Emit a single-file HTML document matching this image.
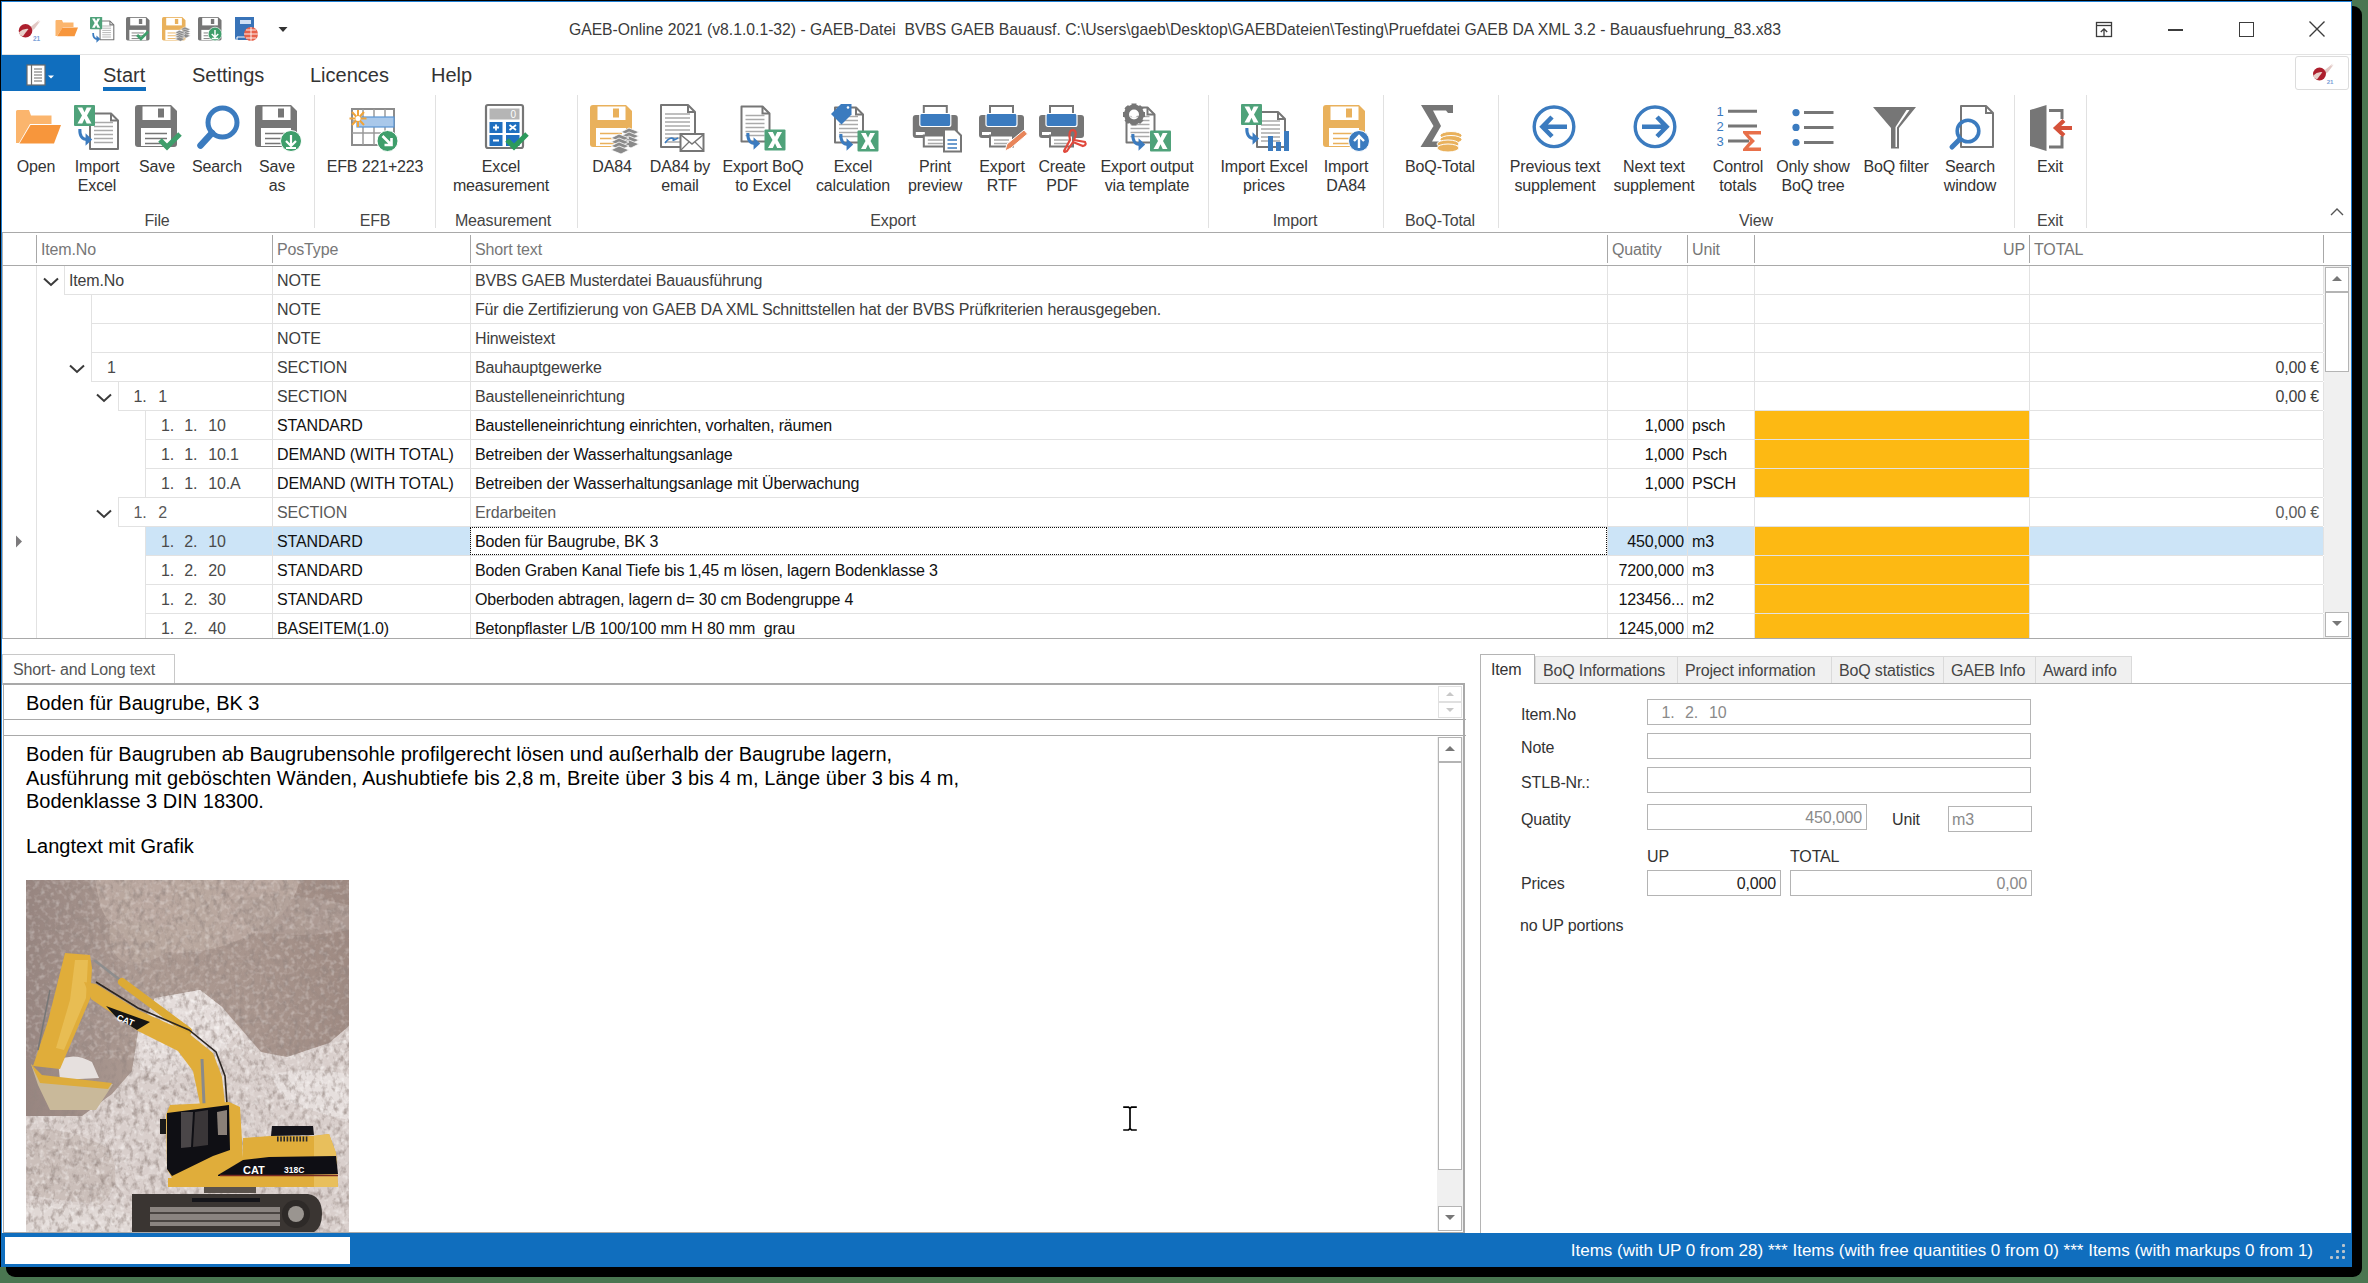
<!DOCTYPE html><html><head><meta charset="utf-8"><style>
html,body{margin:0;padding:0;}
body{width:2368px;height:1283px;overflow:hidden;position:relative;background:#4a7651;font-family:"Liberation Sans",sans-serif;}
.t{position:absolute;white-space:pre;}
.r{position:absolute;box-sizing:border-box;}
</style></head><body>
<div class="r" style="left:6px;top:6px;width:2356px;height:1271px;background:#000;border-radius:9px;"></div>
<div class="r" style="left:0px;top:0px;width:2352px;height:1267px;background:#000;"></div>
<div class="r" style="left:1px;top:1px;width:2351px;height:1266px;background:#fff;border:1px solid #1f7fd4;"></div>
<div class="r" style="left:2px;top:54px;width:2349px;height:1px;background:#e3e3e3;"></div>
<div class="t" style="left:175px;width:2000px;text-align:center;top:19.0px;font-size:15.72px;line-height:22px;color:#3a3a3a;">GAEB-Online 2021 (v8.1.0.1-32) - GAEB-Datei  BVBS GAEB Bauausf. C:\Users\gaeb\Desktop\GAEBDateien\Testing\Pruefdatei GAEB DA XML 3.2 - Bauausfuehrung_83.x83</div>
<svg class="r" style="left:2094px;top:20px" width="20" height="20" viewBox="0 0 20 20"><rect x="2.5" y="2.5" width="15" height="14" fill="none" stroke="#3c3c3c" stroke-width="1.3"/><line x1="2.5" y1="5.5" x2="17.5" y2="5.5" stroke="#3c3c3c" stroke-width="1.3"/><path d="M10 16.5V9M6.8 12L10 8.8L13.2 12" fill="none" stroke="#3c3c3c" stroke-width="1.3"/></svg>
<div class="r" style="left:2168px;top:29px;width:15px;height:2px;background:#3c3c3c;"></div>
<div class="r" style="left:2239px;top:22px;width:15px;height:15px;border:1.3px solid #3c3c3c;"></div>
<svg class="r" style="left:2306px;top:18px" width="22" height="22" viewBox="0 0 22 22"><path d="M3.5 3.5L18.5 18.5M18.5 3.5L3.5 18.5" stroke="#3c3c3c" stroke-width="1.4"/></svg>
<div class="r" style="left:2295px;top:56px;width:54px;height:34px;border:1px solid #dcdcdc;border-radius:3px;"></div>
<div class="r" style="left:1px;top:55px;width:79px;height:36px;background:#106ebe;"></div>
<svg class="r" style="left:24px;top:62px" width="36" height="26" viewBox="0 0 36 26"><rect x="3" y="3" width="18" height="20" fill="#fff" stroke="#6b6b6b" stroke-width="1.2"/><line x1="7.5" y1="3" x2="7.5" y2="23" stroke="#6b6b6b" stroke-width="1.2"/><path d="M10 7h8M10 10h8M10 13h8M10 16h8M10 19h8" stroke="#6b6b6b" stroke-width="1.2"/><path d="M24 13.5h6l-3 3z" fill="#fff"/></svg>
<div class="t" style="left:103px;top:61.0px;font-size:20px;line-height:28px;color:#333;">Start</div>
<div class="r" style="left:103px;top:87px;width:43px;height:4px;background:#106ebe;"></div>
<div class="t" style="left:192px;top:61.0px;font-size:20px;line-height:28px;color:#333;">Settings</div>
<div class="t" style="left:310px;top:61.0px;font-size:20px;line-height:28px;color:#333;">Licences</div>
<div class="t" style="left:431px;top:61.0px;font-size:20px;line-height:28px;color:#333;">Help</div>
<div class="r" style="left:2px;top:232px;width:2349px;height:1px;background:#a9a9a9;"></div>
<div class="r" style="left:314px;top:95px;width:1px;height:133px;background:#e1e1e1;"></div>
<div class="r" style="left:435px;top:95px;width:1px;height:133px;background:#e1e1e1;"></div>
<div class="r" style="left:577px;top:95px;width:1px;height:133px;background:#e1e1e1;"></div>
<div class="r" style="left:1208px;top:95px;width:1px;height:133px;background:#e1e1e1;"></div>
<div class="r" style="left:1383px;top:95px;width:1px;height:133px;background:#e1e1e1;"></div>
<div class="r" style="left:1498px;top:95px;width:1px;height:133px;background:#e1e1e1;"></div>
<div class="r" style="left:2014px;top:95px;width:1px;height:133px;background:#e1e1e1;"></div>
<div class="r" style="left:2086px;top:95px;width:1px;height:133px;background:#e1e1e1;"></div>
<div class="t" style="left:-964px;width:2000px;text-align:center;top:156.0px;font-size:16px;line-height:22px;color:#333;letter-spacing:-0.15px;">Open</div>
<div class="t" style="left:-903px;width:2000px;text-align:center;top:156.0px;font-size:16px;line-height:22px;color:#333;letter-spacing:-0.15px;">Import</div>
<div class="t" style="left:-903px;width:2000px;text-align:center;top:175.0px;font-size:16px;line-height:22px;color:#333;letter-spacing:-0.15px;">Excel</div>
<div class="t" style="left:-843px;width:2000px;text-align:center;top:156.0px;font-size:16px;line-height:22px;color:#333;letter-spacing:-0.15px;">Save</div>
<div class="t" style="left:-783px;width:2000px;text-align:center;top:156.0px;font-size:16px;line-height:22px;color:#333;letter-spacing:-0.15px;">Search</div>
<div class="t" style="left:-723px;width:2000px;text-align:center;top:156.0px;font-size:16px;line-height:22px;color:#333;letter-spacing:-0.15px;">Save</div>
<div class="t" style="left:-723px;width:2000px;text-align:center;top:175.0px;font-size:16px;line-height:22px;color:#333;letter-spacing:-0.15px;">as</div>
<div class="t" style="left:-625px;width:2000px;text-align:center;top:156.0px;font-size:16px;line-height:22px;color:#333;letter-spacing:-0.15px;">EFB 221+223</div>
<div class="t" style="left:-499px;width:2000px;text-align:center;top:156.0px;font-size:16px;line-height:22px;color:#333;letter-spacing:-0.15px;">Excel</div>
<div class="t" style="left:-499px;width:2000px;text-align:center;top:175.0px;font-size:16px;line-height:22px;color:#333;letter-spacing:-0.15px;">measurement</div>
<div class="t" style="left:-388px;width:2000px;text-align:center;top:156.0px;font-size:16px;line-height:22px;color:#333;letter-spacing:-0.15px;">DA84</div>
<div class="t" style="left:-320px;width:2000px;text-align:center;top:156.0px;font-size:16px;line-height:22px;color:#333;letter-spacing:-0.15px;">DA84 by</div>
<div class="t" style="left:-320px;width:2000px;text-align:center;top:175.0px;font-size:16px;line-height:22px;color:#333;letter-spacing:-0.15px;">email</div>
<div class="t" style="left:-237px;width:2000px;text-align:center;top:156.0px;font-size:16px;line-height:22px;color:#333;letter-spacing:-0.15px;">Export BoQ</div>
<div class="t" style="left:-237px;width:2000px;text-align:center;top:175.0px;font-size:16px;line-height:22px;color:#333;letter-spacing:-0.15px;">to Excel</div>
<div class="t" style="left:-147px;width:2000px;text-align:center;top:156.0px;font-size:16px;line-height:22px;color:#333;letter-spacing:-0.15px;">Excel</div>
<div class="t" style="left:-147px;width:2000px;text-align:center;top:175.0px;font-size:16px;line-height:22px;color:#333;letter-spacing:-0.15px;">calculation</div>
<div class="t" style="left:-65px;width:2000px;text-align:center;top:156.0px;font-size:16px;line-height:22px;color:#333;letter-spacing:-0.15px;">Print</div>
<div class="t" style="left:-65px;width:2000px;text-align:center;top:175.0px;font-size:16px;line-height:22px;color:#333;letter-spacing:-0.15px;">preview</div>
<div class="t" style="left:2px;width:2000px;text-align:center;top:156.0px;font-size:16px;line-height:22px;color:#333;letter-spacing:-0.15px;">Export</div>
<div class="t" style="left:2px;width:2000px;text-align:center;top:175.0px;font-size:16px;line-height:22px;color:#333;letter-spacing:-0.15px;">RTF</div>
<div class="t" style="left:62px;width:2000px;text-align:center;top:156.0px;font-size:16px;line-height:22px;color:#333;letter-spacing:-0.15px;">Create</div>
<div class="t" style="left:62px;width:2000px;text-align:center;top:175.0px;font-size:16px;line-height:22px;color:#333;letter-spacing:-0.15px;">PDF</div>
<div class="t" style="left:147px;width:2000px;text-align:center;top:156.0px;font-size:16px;line-height:22px;color:#333;letter-spacing:-0.15px;">Export output</div>
<div class="t" style="left:147px;width:2000px;text-align:center;top:175.0px;font-size:16px;line-height:22px;color:#333;letter-spacing:-0.15px;">via template</div>
<div class="t" style="left:264px;width:2000px;text-align:center;top:156.0px;font-size:16px;line-height:22px;color:#333;letter-spacing:-0.15px;">Import Excel</div>
<div class="t" style="left:264px;width:2000px;text-align:center;top:175.0px;font-size:16px;line-height:22px;color:#333;letter-spacing:-0.15px;">prices</div>
<div class="t" style="left:346px;width:2000px;text-align:center;top:156.0px;font-size:16px;line-height:22px;color:#333;letter-spacing:-0.15px;">Import</div>
<div class="t" style="left:346px;width:2000px;text-align:center;top:175.0px;font-size:16px;line-height:22px;color:#333;letter-spacing:-0.15px;">DA84</div>
<div class="t" style="left:440px;width:2000px;text-align:center;top:156.0px;font-size:16px;line-height:22px;color:#333;letter-spacing:-0.15px;">BoQ-Total</div>
<div class="t" style="left:555px;width:2000px;text-align:center;top:156.0px;font-size:16px;line-height:22px;color:#333;letter-spacing:-0.15px;">Previous text</div>
<div class="t" style="left:555px;width:2000px;text-align:center;top:175.0px;font-size:16px;line-height:22px;color:#333;letter-spacing:-0.15px;">supplement</div>
<div class="t" style="left:654px;width:2000px;text-align:center;top:156.0px;font-size:16px;line-height:22px;color:#333;letter-spacing:-0.15px;">Next text</div>
<div class="t" style="left:654px;width:2000px;text-align:center;top:175.0px;font-size:16px;line-height:22px;color:#333;letter-spacing:-0.15px;">supplement</div>
<div class="t" style="left:738px;width:2000px;text-align:center;top:156.0px;font-size:16px;line-height:22px;color:#333;letter-spacing:-0.15px;">Control</div>
<div class="t" style="left:738px;width:2000px;text-align:center;top:175.0px;font-size:16px;line-height:22px;color:#333;letter-spacing:-0.15px;">totals</div>
<div class="t" style="left:813px;width:2000px;text-align:center;top:156.0px;font-size:16px;line-height:22px;color:#333;letter-spacing:-0.15px;">Only show</div>
<div class="t" style="left:813px;width:2000px;text-align:center;top:175.0px;font-size:16px;line-height:22px;color:#333;letter-spacing:-0.15px;">BoQ tree</div>
<div class="t" style="left:896px;width:2000px;text-align:center;top:156.0px;font-size:16px;line-height:22px;color:#333;letter-spacing:-0.15px;">BoQ filter</div>
<div class="t" style="left:970px;width:2000px;text-align:center;top:156.0px;font-size:16px;line-height:22px;color:#333;letter-spacing:-0.15px;">Search</div>
<div class="t" style="left:970px;width:2000px;text-align:center;top:175.0px;font-size:16px;line-height:22px;color:#333;letter-spacing:-0.15px;">window</div>
<div class="t" style="left:1050px;width:2000px;text-align:center;top:156.0px;font-size:16px;line-height:22px;color:#333;letter-spacing:-0.15px;">Exit</div>
<div class="t" style="left:-843px;width:2000px;text-align:center;top:210.0px;font-size:16px;line-height:22px;color:#444;letter-spacing:-0.15px;">File</div>
<div class="t" style="left:-625px;width:2000px;text-align:center;top:210.0px;font-size:16px;line-height:22px;color:#444;letter-spacing:-0.15px;">EFB</div>
<div class="t" style="left:-497px;width:2000px;text-align:center;top:210.0px;font-size:16px;line-height:22px;color:#444;letter-spacing:-0.15px;">Measurement</div>
<div class="t" style="left:-107px;width:2000px;text-align:center;top:210.0px;font-size:16px;line-height:22px;color:#444;letter-spacing:-0.15px;">Export</div>
<div class="t" style="left:295px;width:2000px;text-align:center;top:210.0px;font-size:16px;line-height:22px;color:#444;letter-spacing:-0.15px;">Import</div>
<div class="t" style="left:440px;width:2000px;text-align:center;top:210.0px;font-size:16px;line-height:22px;color:#444;letter-spacing:-0.15px;">BoQ-Total</div>
<div class="t" style="left:756px;width:2000px;text-align:center;top:210.0px;font-size:16px;line-height:22px;color:#444;letter-spacing:-0.15px;">View</div>
<div class="t" style="left:1050px;width:2000px;text-align:center;top:210.0px;font-size:16px;line-height:22px;color:#444;letter-spacing:-0.15px;">Exit</div>
<svg class="r" style="left:2329px;top:206px" width="16" height="12" viewBox="0 0 16 12"><path d="M2 9L8 3L14 9" fill="none" stroke="#555" stroke-width="1.4"/></svg>
<svg class="r" style="left:0px;top:90px;overflow:visible" width="2352" height="142" viewBox="0 90 2352 142"><path d="M16 143V111.5Q16 110 17.5 110H29L31 115.5H51.5V124H30L19 143Z" fill="#fbb56d"/><path d="M19.5 143.5L30.5 125H61L54 143.5Z" fill="#f7963c"/><g transform="translate(89 112.5) scale(1)"><path d="M1 1L22 1L29 8L29 36.5L1 36.5Z" fill="#fff" stroke="#767676" stroke-width="2" stroke-linejoin="round"/><path d="M22 1V8H29" fill="none" stroke="#767676" stroke-width="2"/><line x1="5" y1="10" x2="24" y2="10" stroke="#aaa" stroke-width="1.5"/><line x1="5" y1="14" x2="24" y2="14" stroke="#aaa" stroke-width="1.5"/><line x1="5" y1="18" x2="24" y2="18" stroke="#aaa" stroke-width="1.5"/><line x1="5" y1="22" x2="24" y2="22" stroke="#aaa" stroke-width="1.5"/><line x1="5" y1="26" x2="24" y2="26" stroke="#aaa" stroke-width="1.5"/><line x1="5" y1="30" x2="24" y2="30" stroke="#aaa" stroke-width="1.5"/></g><g transform="translate(74 105) scale(1)"><rect x="0" y="0" width="21" height="21" fill="#4fa27a" rx="1"/><g transform="scale(1.0)"><path d="M3.5 2.5H8.3L10.5 7.3L12.7 2.5H17.5L13 10.5L17.5 18.5H12.7L10.5 13.7L8.3 18.5H3.5L8 10.5Z" fill="#fff"/></g></g><g transform="translate(77 129) scale(0.95)"><g transform="translate(0 0) scale(1)"><path d="M3 0Q2.5 11 11 11" fill="none" stroke="#3b7bbf" stroke-width="3.2"/><path d="M9 4.5L16 11L9 17.5Z" fill="#3b7bbf"/></g></g><g transform="translate(135 105) scale(1)"><path d="M0 3Q0 0 3 0L36 0L42 6L42 39Q42 42 39 42L3 42Q0 42 0 39Z" fill="#767676"/><rect x="7.5" y="1.5" width="28" height="13.5" fill="#fff"/><rect x="23" y="3.5" width="6" height="9" fill="#767676"/><rect x="6" y="23" width="30" height="18" fill="#fff"/><path d="M10 28.5H32M10 33.5H32M10 38.5H26" stroke="#767676" stroke-width="1.6"/></g><g transform="translate(158 131) scale(1)"><path d="M2 9L9 16L22 3" fill="none" stroke="#3e9e6b" stroke-width="5" stroke-linejoin="miter"/></g><circle cx="222.5" cy="122.5" r="14.5" fill="none" stroke="#3b7bbf" stroke-width="5"/><path d="M212 133L200.5 145.5" stroke="#3b7bbf" stroke-width="6.5" stroke-linecap="round"/><g transform="translate(255 105) scale(1)"><path d="M0 3Q0 0 3 0L36 0L42 6L42 39Q42 42 39 42L3 42Q0 42 0 39Z" fill="#767676"/><rect x="7.5" y="1.5" width="28" height="13.5" fill="#fff"/><rect x="23" y="3.5" width="6" height="9" fill="#767676"/><rect x="6" y="23" width="30" height="18" fill="#fff"/><path d="M10 28.5H32M10 33.5H32M10 38.5H26" stroke="#767676" stroke-width="1.6"/></g><g transform="translate(291 141) scale(1)"><circle cx="0" cy="0" r="10.5" fill="#3e9e6b" stroke="#fff" stroke-width="1"/><path d="M0 -6V5M-5 0L0 5L5 0M-5 7H5" fill="none" stroke="#fff" stroke-width="2.2"/></g><rect x="352" y="109" width="42" height="36" fill="#fff" stroke="#8c8c8c" stroke-width="2"/><path d="M363 109V145M374 109V145M385 109V145M352 121H394M352 133H394" stroke="#9a9a9a" stroke-width="1.5"/><rect x="357" y="117" width="37" height="10" fill="#a9c8ea" stroke="#5b95d3" stroke-width="1.2"/><g stroke="#f0a43a" stroke-width="2"><path d="M358 110V127M349.5 118.5H366.5M352 112L364 125M364 112L352 125"/></g><circle cx="358" cy="118.5" r="2.5" fill="#fff"/><g transform="translate(387.5 141) scale(1)"><circle cx="0" cy="0" r="10.5" fill="#3e9e6b" stroke="#fff" stroke-width="1"/><path d="M-5 -5L4 4M4 -3V4H-3" fill="none" stroke="#fff" stroke-width="2.6"/></g><rect x="486" y="105" width="37" height="43" rx="2" fill="#fff" stroke="#767676" stroke-width="2.2"/><rect x="489.5" y="108.5" width="30" height="11" fill="#b5b5b5"/><text x="516" y="118" font-size="10" fill="#fff" text-anchor="end" font-family="Liberation Sans">0</text><rect x="489.5" y="122" width="13" height="11" fill="#1f6fc0"/><rect x="506" y="122" width="13.5" height="11" fill="#1f6fc0"/><rect x="489.5" y="135" width="13" height="11" fill="#1f6fc0"/><rect x="506" y="135" width="13.5" height="11" fill="#1f6fc0"/><path d="M496 124.5V130.5M493 127.5H499M509.5 125L516 130M516 125L509.5 130M493 140.5H499" stroke="#fff" stroke-width="1.8"/><g transform="translate(505 131) scale(1)"><path d="M2 9L9 16L22 3" fill="none" stroke="#2c9a5c" stroke-width="5" stroke-linejoin="miter"/></g><g transform="translate(590 105) scale(1)"><path d="M0 3Q0 0 3 0L36 0L42 6L42 39Q42 42 39 42L3 42Q0 42 0 39Z" fill="#e9b15c"/><rect x="7.5" y="1.5" width="28" height="13.5" fill="#fff"/><rect x="23" y="3.5" width="6" height="9" fill="#e9b15c"/><rect x="6" y="23" width="30" height="18" fill="#fff"/><path d="M10 28.5H32M10 33.5H32M10 38.5H26" stroke="#e9b15c" stroke-width="1.6"/></g><g transform="translate(611 128) scale(1)"><path d="M10 4L18 0L28 4L20 8Z" fill="#8a8a8a" stroke="#fff" stroke-width="0.8"/><path d="M10 8L18 4L28 8L20 12Z" fill="#8a8a8a" stroke="#fff" stroke-width="0.8"/><path d="M10 12L18 8L28 12L20 16Z" fill="#8a8a8a" stroke="#fff" stroke-width="0.8"/><path d="M10 16L18 12L28 16L20 20Z" fill="#8a8a8a" stroke="#fff" stroke-width="0.8"/><path d="M0 10L8 6L18 10L10 14Z" fill="#8a8a8a" stroke="#fff" stroke-width="0.8"/><path d="M0 14L8 10L18 14L10 18Z" fill="#8a8a8a" stroke="#fff" stroke-width="0.8"/><path d="M0 18L8 14L18 18L10 22Z" fill="#8a8a8a" stroke="#fff" stroke-width="0.8"/><path d="M0 22L8 18L18 22L10 26Z" fill="#8a8a8a" stroke="#fff" stroke-width="0.8"/></g><g transform="translate(660 104) scale(1)"><path d="M1 1L28 1L35 8L35 43L1 43Z" fill="#fff" stroke="#767676" stroke-width="2" stroke-linejoin="round"/><path d="M28 1V8H35" fill="none" stroke="#767676" stroke-width="2"/><line x1="5" y1="10" x2="30" y2="10" stroke="#aaa" stroke-width="1.5"/><line x1="5" y1="14" x2="30" y2="14" stroke="#aaa" stroke-width="1.5"/><line x1="5" y1="18" x2="30" y2="18" stroke="#aaa" stroke-width="1.5"/><line x1="5" y1="22" x2="30" y2="22" stroke="#aaa" stroke-width="1.5"/><line x1="5" y1="26" x2="30" y2="26" stroke="#aaa" stroke-width="1.5"/><line x1="5" y1="30" x2="30" y2="30" stroke="#aaa" stroke-width="1.5"/><line x1="5" y1="34" x2="30" y2="34" stroke="#aaa" stroke-width="1.5"/><line x1="5" y1="38" x2="30" y2="38" stroke="#aaa" stroke-width="1.5"/></g><path d="M665 143Q670 136 674 139Q671 142 678 138" fill="none" stroke="#3b7bbf" stroke-width="1.6"/><rect x="680.5" y="134" width="23" height="17" fill="#fff" stroke="#767676" stroke-width="2"/><path d="M681 135L692 144L703 135" fill="none" stroke="#767676" stroke-width="1.6"/><path d="M681 150L689 142M703 150L695 142" stroke="#767676" stroke-width="1.2"/><g transform="translate(740.5 105.5) scale(1)"><path d="M1 1L22 1L29 8L29 36L1 36Z" fill="#fff" stroke="#767676" stroke-width="2" stroke-linejoin="round"/><path d="M22 1V8H29" fill="none" stroke="#767676" stroke-width="2"/><line x1="5" y1="10" x2="24" y2="10" stroke="#aaa" stroke-width="1.5"/><line x1="5" y1="14" x2="24" y2="14" stroke="#aaa" stroke-width="1.5"/><line x1="5" y1="18" x2="24" y2="18" stroke="#aaa" stroke-width="1.5"/><line x1="5" y1="22" x2="24" y2="22" stroke="#aaa" stroke-width="1.5"/><line x1="5" y1="26" x2="24" y2="26" stroke="#aaa" stroke-width="1.5"/><line x1="5" y1="30" x2="24" y2="30" stroke="#aaa" stroke-width="1.5"/></g><g transform="translate(745 133) scale(0.95)"><g transform="translate(0 0) scale(1)"><path d="M3 0Q2.5 11 11 11" fill="none" stroke="#3b7bbf" stroke-width="3.2"/><path d="M9 4.5L16 11L9 17.5Z" fill="#3b7bbf"/></g></g><g transform="translate(764.5 129.5) scale(1)"><rect x="0" y="0" width="21" height="21" fill="#4fa27a" rx="1"/><g transform="scale(1.0)"><path d="M3.5 2.5H8.3L10.5 7.3L12.7 2.5H17.5L13 10.5L17.5 18.5H12.7L10.5 13.7L8.3 18.5H3.5L8 10.5Z" fill="#fff"/></g></g><g transform="translate(834 106.5) scale(1)"><path d="M1 1L22 1L29 8L29 36L1 36Z" fill="#fff" stroke="#767676" stroke-width="2" stroke-linejoin="round"/><path d="M22 1V8H29" fill="none" stroke="#767676" stroke-width="2"/><line x1="5" y1="10" x2="24" y2="10" stroke="#aaa" stroke-width="1.5"/><line x1="5" y1="14" x2="24" y2="14" stroke="#aaa" stroke-width="1.5"/><line x1="5" y1="18" x2="24" y2="18" stroke="#aaa" stroke-width="1.5"/><line x1="5" y1="22" x2="24" y2="22" stroke="#aaa" stroke-width="1.5"/><line x1="5" y1="26" x2="24" y2="26" stroke="#aaa" stroke-width="1.5"/><line x1="5" y1="30" x2="24" y2="30" stroke="#aaa" stroke-width="1.5"/></g><path d="M831 114L841 104H851.5V114.5L841.5 124.5Z" fill="#3b7bbf"/><circle cx="848" cy="107.5" r="1.3" fill="#fff"/><g transform="translate(838 134) scale(0.95)"><g transform="translate(0 0) scale(1)"><path d="M3 0Q2.5 11 11 11" fill="none" stroke="#3b7bbf" stroke-width="3.2"/><path d="M9 4.5L16 11L9 17.5Z" fill="#3b7bbf"/></g></g><g transform="translate(857.5 130.5) scale(1)"><rect x="0" y="0" width="21" height="21" fill="#4fa27a" rx="1"/><g transform="scale(1.0)"><path d="M3.5 2.5H8.3L10.5 7.3L12.7 2.5H17.5L13 10.5L17.5 18.5H12.7L10.5 13.7L8.3 18.5H3.5L8 10.5Z" fill="#fff"/></g></g><g transform="translate(912.8 105) scale(1)"><rect x="11" y="1" width="23" height="10" fill="#fff" stroke="#767676" stroke-width="2"/><rect x="0" y="10" width="45" height="23" rx="3" fill="#767676"/><rect x="7" y="8.5" width="31" height="13" rx="2" fill="#3b7bbf" stroke="#fff" stroke-width="1.2"/><rect x="3" y="27" width="9" height="3" fill="#fff"/><rect x="11" y="30.5" width="23" height="11" fill="#fff" stroke="#767676" stroke-width="2"/><path d="M15 35H30M15 38.5H30" stroke="#aaa" stroke-width="1.4"/></g><g transform="translate(979 105) scale(1)"><rect x="11" y="1" width="23" height="10" fill="#fff" stroke="#767676" stroke-width="2"/><rect x="0" y="10" width="45" height="23" rx="3" fill="#767676"/><rect x="7" y="8.5" width="31" height="13" rx="2" fill="#3b7bbf" stroke="#fff" stroke-width="1.2"/><rect x="3" y="27" width="9" height="3" fill="#fff"/><rect x="11" y="30.5" width="23" height="11" fill="#fff" stroke="#767676" stroke-width="2"/><path d="M15 35H30M15 38.5H30" stroke="#aaa" stroke-width="1.4"/></g><g transform="translate(1039 105) scale(1)"><rect x="11" y="1" width="23" height="10" fill="#fff" stroke="#767676" stroke-width="2"/><rect x="0" y="10" width="45" height="23" rx="3" fill="#767676"/><rect x="7" y="8.5" width="31" height="13" rx="2" fill="#3b7bbf" stroke="#fff" stroke-width="1.2"/><rect x="3" y="27" width="9" height="3" fill="#fff"/><rect x="11" y="30.5" width="23" height="11" fill="#fff" stroke="#767676" stroke-width="2"/><path d="M15 35H30M15 38.5H30" stroke="#aaa" stroke-width="1.4"/></g><path d="M944 129.5H955L961 135.5V151.5H944Z" fill="#fff" stroke="#767676" stroke-width="2"/><path d="M947.5 140H957M947.5 144H957M947.5 148H957" stroke="#3b7bbf" stroke-width="1.6"/><path d="M1005 151L1007 144L1024 130L1027.5 134L1011 148Z" fill="#e8855a" stroke="#fff" stroke-width="1"/><path d="M1073 130Q1068 130 1070 140L1064.5 150Q1063 153 1067 151L1073 142L1083 146Q1087 145 1085 142L1074 140Q1078 131 1073 130Z" fill="none" stroke="#e0483c" stroke-width="2.2"/><g transform="translate(1125.5 106.5) scale(1)"><path d="M1 1L22 1L29 8L29 36L1 36Z" fill="#fff" stroke="#767676" stroke-width="2" stroke-linejoin="round"/><path d="M22 1V8H29" fill="none" stroke="#767676" stroke-width="2"/><line x1="5" y1="10" x2="24" y2="10" stroke="#aaa" stroke-width="1.5"/><line x1="5" y1="14" x2="24" y2="14" stroke="#aaa" stroke-width="1.5"/><line x1="5" y1="18" x2="24" y2="18" stroke="#aaa" stroke-width="1.5"/><line x1="5" y1="22" x2="24" y2="22" stroke="#aaa" stroke-width="1.5"/><line x1="5" y1="26" x2="24" y2="26" stroke="#aaa" stroke-width="1.5"/><line x1="5" y1="30" x2="24" y2="30" stroke="#aaa" stroke-width="1.5"/></g><g transform="translate(1134 114.5)"><circle r="7.5" fill="none" stroke="#767676" stroke-width="5"/><rect x="-2.5" y="-11" width="5" height="5" fill="#767676" transform="rotate(0)"/><rect x="-2.5" y="-11" width="5" height="5" fill="#767676" transform="rotate(45)"/><rect x="-2.5" y="-11" width="5" height="5" fill="#767676" transform="rotate(90)"/><rect x="-2.5" y="-11" width="5" height="5" fill="#767676" transform="rotate(135)"/><rect x="-2.5" y="-11" width="5" height="5" fill="#767676" transform="rotate(180)"/><rect x="-2.5" y="-11" width="5" height="5" fill="#767676" transform="rotate(225)"/><rect x="-2.5" y="-11" width="5" height="5" fill="#767676" transform="rotate(270)"/><rect x="-2.5" y="-11" width="5" height="5" fill="#767676" transform="rotate(315)"/><circle r="3" fill="#fff"/></g><g transform="translate(1130 134) scale(0.95)"><g transform="translate(0 0) scale(1)"><path d="M3 0Q2.5 11 11 11" fill="none" stroke="#3b7bbf" stroke-width="3.2"/><path d="M9 4.5L16 11L9 17.5Z" fill="#3b7bbf"/></g></g><g transform="translate(1150 130.5) scale(1)"><rect x="0" y="0" width="21" height="21" fill="#4fa27a" rx="1"/><g transform="scale(1.0)"><path d="M3.5 2.5H8.3L10.5 7.3L12.7 2.5H17.5L13 10.5L17.5 18.5H12.7L10.5 13.7L8.3 18.5H3.5L8 10.5Z" fill="#fff"/></g></g><g transform="translate(1256 111) scale(1)"><path d="M1 1L22 1L29 8L29 36L1 36Z" fill="#fff" stroke="#767676" stroke-width="2" stroke-linejoin="round"/><path d="M22 1V8H29" fill="none" stroke="#767676" stroke-width="2"/><line x1="5" y1="10" x2="24" y2="10" stroke="#aaa" stroke-width="1.5"/><line x1="5" y1="14" x2="24" y2="14" stroke="#aaa" stroke-width="1.5"/><line x1="5" y1="18" x2="24" y2="18" stroke="#aaa" stroke-width="1.5"/><line x1="5" y1="22" x2="24" y2="22" stroke="#aaa" stroke-width="1.5"/><line x1="5" y1="26" x2="24" y2="26" stroke="#aaa" stroke-width="1.5"/><line x1="5" y1="30" x2="24" y2="30" stroke="#aaa" stroke-width="1.5"/></g><g transform="translate(1244 128) scale(0.95)"><g transform="translate(0 0) scale(1)"><path d="M3 0Q2.5 11 11 11" fill="none" stroke="#3b7bbf" stroke-width="3.2"/><path d="M9 4.5L16 11L9 17.5Z" fill="#3b7bbf"/></g></g><g transform="translate(1241 104) scale(1)"><rect x="0" y="0" width="21" height="21" fill="#4fa27a" rx="1"/><g transform="scale(1.0)"><path d="M3.5 2.5H8.3L10.5 7.3L12.7 2.5H17.5L13 10.5L17.5 18.5H12.7L10.5 13.7L8.3 18.5H3.5L8 10.5Z" fill="#fff"/></g></g><rect x="1268" y="136" width="5" height="15" fill="#3b7bbf"/><rect x="1276" y="142" width="5" height="9" fill="#3b7bbf"/><rect x="1284" y="131" width="5" height="20" fill="#3b7bbf"/><g transform="translate(1323 105) scale(1)"><path d="M0 3Q0 0 3 0L36 0L42 6L42 39Q42 42 39 42L3 42Q0 42 0 39Z" fill="#e9b15c"/><rect x="7.5" y="1.5" width="28" height="13.5" fill="#fff"/><rect x="23" y="3.5" width="6" height="9" fill="#e9b15c"/><rect x="6" y="23" width="30" height="18" fill="#fff"/><path d="M10 28.5H32M10 33.5H32M10 38.5H26" stroke="#e9b15c" stroke-width="1.6"/></g><g transform="translate(1359 141) scale(1)"><circle cx="0" cy="0" r="10.5" fill="#3b7bbf" stroke="#fff" stroke-width="1"/><path d="M0 7V-5M-5 0L0 -5L5 0" fill="none" stroke="#fff" stroke-width="2.4"/></g><path d="M1421 105H1453V113H1448L1446 110.5H1433L1441 126L1432 141.5H1447L1450 138H1454V147H1420.5L1433.5 126Z" fill="#767676"/><ellipse cx="1451" cy="135.5" rx="11" ry="4" fill="#e9b15c" stroke="#fff" stroke-width="1"/><ellipse cx="1451" cy="139.5" rx="11" ry="4" fill="#e9b15c" stroke="#fff" stroke-width="1"/><ellipse cx="1448" cy="144" rx="11" ry="4" fill="#e9b15c" stroke="#fff" stroke-width="1"/><ellipse cx="1448" cy="148" rx="11" ry="4" fill="#e9b15c" stroke="#fff" stroke-width="1"/><circle cx="1554" cy="126.8" r="19.8" fill="none" stroke="#3b7bbf" stroke-width="3.4"/><path d="M1567 126.8H1543M1552 117L1542.5 126.8L1552 136.5" fill="none" stroke="#3b7bbf" stroke-width="4.6"/><circle cx="1655" cy="126.8" r="19.8" fill="none" stroke="#3b7bbf" stroke-width="3.4"/><path d="M1642 126.8H1666M1657 117L1666.5 126.8L1657 136.5" fill="none" stroke="#3b7bbf" stroke-width="4.6"/><g font-family="Liberation Sans" font-size="13" fill="#3b7bbf" text-anchor="middle"><text x="1720" y="116">1</text><text x="1720" y="131">2</text><text x="1720" y="146">3</text></g><path d="M1728 111.2H1757M1728 126H1757M1728 141H1749" stroke="#767676" stroke-width="3"/><path d="M1743 131H1761V134.5H1748.5L1755 141L1748.5 147.5H1761V151H1743V149L1750 141L1743 133Z" fill="#e8704a"/><g fill="#3b7bbf"><circle cx="1796" cy="112.6" r="3.6"/><circle cx="1796" cy="127.4" r="3.6"/><circle cx="1796" cy="142.5" r="3.6"/></g><path d="M1804 112.6H1833.5M1804 127.4H1833.5M1804 142.5H1833.5" stroke="#767676" stroke-width="3"/><path d="M1873 107H1916L1899 128V148.5H1891V128Z" fill="#767676"/><path d="M1906.5 110H1909.5L1897 127.5V147H1895.5V127Z" fill="#fff"/><g transform="translate(1960 105) scale(1)"><path d="M1 1L26 1L33 8L33 42L1 42Z" fill="#fff" stroke="#767676" stroke-width="2" stroke-linejoin="round"/><path d="M26 1V8H33" fill="none" stroke="#767676" stroke-width="2"/></g><circle cx="1968" cy="131" r="10.8" fill="none" stroke="#3b7bbf" stroke-width="3.6"/><path d="M1960 139L1952 147" stroke="#3b7bbf" stroke-width="5" stroke-linecap="round"/><path d="M2030 110L2046.5 105V151L2030 146Z" fill="#767676"/><path d="M2049 110.5H2062V119M2062 136V147H2049" fill="none" stroke="#767676" stroke-width="3"/><path d="M2072 128H2057M2064 120.5L2056 128L2064 135.5" fill="none" stroke="#d5523a" stroke-width="4.2"/></svg>
<svg class="r" style="left:0px;top:0px;overflow:visible" width="300" height="54" viewBox="0 0 300 54"><path d="M55.5 36V21Q55.5 20 56.5 20H62L63 22.5H73.5V27H63L57 36Z" fill="#fbb56d"/><path d="M57 36.3L62.5 27.5H78L74.5 36.3Z" fill="#f7963c"/><g transform="translate(99.5 20.5) scale(0.55)"><path d="M1 1L19 1L26 8L26 35L1 35Z" fill="#fff" stroke="#767676" stroke-width="2" stroke-linejoin="round"/><path d="M19 1V8H26" fill="none" stroke="#767676" stroke-width="2"/><line x1="5" y1="10" x2="21" y2="10" stroke="#aaa" stroke-width="1.5"/><line x1="5" y1="14" x2="21" y2="14" stroke="#aaa" stroke-width="1.5"/><line x1="5" y1="18" x2="21" y2="18" stroke="#aaa" stroke-width="1.5"/><line x1="5" y1="22" x2="21" y2="22" stroke="#aaa" stroke-width="1.5"/><line x1="5" y1="26" x2="21" y2="26" stroke="#aaa" stroke-width="1.5"/><line x1="5" y1="30" x2="21" y2="30" stroke="#aaa" stroke-width="1.5"/></g><g transform="translate(90 17) scale(0.58)"><rect x="0" y="0" width="21" height="21" fill="#4fa27a" rx="1"/><g transform="scale(1.0)"><path d="M3.5 2.5H8.3L10.5 7.3L12.7 2.5H17.5L13 10.5L17.5 18.5H12.7L10.5 13.7L8.3 18.5H3.5L8 10.5Z" fill="#fff"/></g></g><g transform="translate(91.5 33) scale(0.55)"><g transform="translate(0 0) scale(1)"><path d="M3 0Q2.5 11 11 11" fill="none" stroke="#3b7bbf" stroke-width="3.2"/><path d="M9 4.5L16 11L9 17.5Z" fill="#3b7bbf"/></g></g><g transform="translate(126 17) scale(0.56)"><path d="M0 3Q0 0 3 0L36 0L42 6L42 39Q42 42 39 42L3 42Q0 42 0 39Z" fill="#767676"/><rect x="7.5" y="1.5" width="28" height="13.5" fill="#fff"/><rect x="23" y="3.5" width="6" height="9" fill="#767676"/><rect x="6" y="23" width="30" height="18" fill="#fff"/><path d="M10 28.5H32M10 33.5H32M10 38.5H26" stroke="#767676" stroke-width="1.6"/></g><g transform="translate(136 30) scale(0.55)"><path d="M2 9L9 16L22 3" fill="none" stroke="#3e9e6b" stroke-width="5" stroke-linejoin="miter"/></g><g transform="translate(162 17) scale(0.56)"><path d="M0 3Q0 0 3 0L36 0L42 6L42 39Q42 42 39 42L3 42Q0 42 0 39Z" fill="#e9b15c"/><rect x="7.5" y="1.5" width="28" height="13.5" fill="#fff"/><rect x="23" y="3.5" width="6" height="9" fill="#e9b15c"/><rect x="6" y="23" width="30" height="18" fill="#fff"/><path d="M10 28.5H32M10 33.5H32M10 38.5H26" stroke="#e9b15c" stroke-width="1.6"/></g><g transform="translate(175 27) scale(0.55)"><path d="M10 4L18 0L28 4L20 8Z" fill="#8a8a8a" stroke="#fff" stroke-width="0.8"/><path d="M10 8L18 4L28 8L20 12Z" fill="#8a8a8a" stroke="#fff" stroke-width="0.8"/><path d="M10 12L18 8L28 12L20 16Z" fill="#8a8a8a" stroke="#fff" stroke-width="0.8"/><path d="M10 16L18 12L28 16L20 20Z" fill="#8a8a8a" stroke="#fff" stroke-width="0.8"/><path d="M0 10L8 6L18 10L10 14Z" fill="#8a8a8a" stroke="#fff" stroke-width="0.8"/><path d="M0 14L8 10L18 14L10 18Z" fill="#8a8a8a" stroke="#fff" stroke-width="0.8"/><path d="M0 18L8 14L18 18L10 22Z" fill="#8a8a8a" stroke="#fff" stroke-width="0.8"/><path d="M0 22L8 18L18 22L10 26Z" fill="#8a8a8a" stroke="#fff" stroke-width="0.8"/></g><g transform="translate(198 17) scale(0.56)"><path d="M0 3Q0 0 3 0L36 0L42 6L42 39Q42 42 39 42L3 42Q0 42 0 39Z" fill="#767676"/><rect x="7.5" y="1.5" width="28" height="13.5" fill="#fff"/><rect x="23" y="3.5" width="6" height="9" fill="#767676"/><rect x="6" y="23" width="30" height="18" fill="#fff"/><path d="M10 28.5H32M10 33.5H32M10 38.5H26" stroke="#767676" stroke-width="1.6"/></g><g transform="translate(215 34) scale(0.65)"><circle cx="0" cy="0" r="10.5" fill="#3e9e6b" stroke="#fff" stroke-width="1"/><path d="M0 -6V5M-5 0L0 5L5 0M-5 7H5" fill="none" stroke="#fff" stroke-width="2.2"/></g><path d="M235 17H254V40H237Q235 40 235 38Z" fill="#3873b8"/><rect x="240" y="20" width="11" height="4" fill="#cfe0f4"/><path d="M237 40V37H247" stroke="#fff" stroke-width="1" fill="none"/><circle cx="251" cy="34" r="7" fill="#e8624a"/><path d="M244 34H258M251 27V41M246 30H256M246 38H256" stroke="#fff" stroke-width="0.9"/><path d="M278.5 27H287.5L283 32Z" fill="#333"/><g transform="translate(25.5 30.8) scale(1.0)"><path d="M4 -3L14 -11L12 -8L15 -10L9 -2L5 1Z" fill="#e2c8c4"/><circle cx="0" cy="0" r="6.8" fill="#ad1f2d"/><path d="M-6.5 1.5L-3 -1L1.5 -2L3 -1.8L0 2L-2.5 5.5L-5.5 4.5Z" fill="#e8d2cc"/><text x="7.5" y="10" font-size="6.5" font-weight="bold" fill="#7aa0d8" font-family="Liberation Sans">21</text></g></svg>
<svg class="r" style="left:2296px;top:57px;overflow:visible" width="52" height="32" viewBox="2296 57 52 32"><g transform="translate(2319.5 74) scale(0.95)"><path d="M4 -3L14 -11L12 -8L15 -10L9 -2L5 1Z" fill="#e2c8c4"/><circle cx="0" cy="0" r="6.8" fill="#ad1f2d"/><path d="M-6.5 1.5L-3 -1L1.5 -2L3 -1.8L0 2L-2.5 5.5L-5.5 4.5Z" fill="#e8d2cc"/><text x="7.5" y="10" font-size="6.5" font-weight="bold" fill="#7aa0d8" font-family="Liberation Sans">21</text></g></svg>
<div class="r" style="left:36px;top:235px;width:1px;height:28px;background:#a8a8a8;"></div>
<div class="r" style="left:272px;top:235px;width:1px;height:28px;background:#a8a8a8;"></div>
<div class="r" style="left:470px;top:235px;width:1px;height:28px;background:#a8a8a8;"></div>
<div class="r" style="left:1607px;top:235px;width:1px;height:28px;background:#a8a8a8;"></div>
<div class="r" style="left:1687px;top:235px;width:1px;height:28px;background:#a8a8a8;"></div>
<div class="r" style="left:1754px;top:235px;width:1px;height:28px;background:#a8a8a8;"></div>
<div class="r" style="left:2029px;top:235px;width:1px;height:28px;background:#a8a8a8;"></div>
<div class="r" style="left:2323px;top:235px;width:1px;height:28px;background:#a8a8a8;"></div>
<div class="r" style="left:2px;top:233px;width:1px;height:405px;background:#b4b4b4;"></div>
<div class="r" style="left:2px;top:265px;width:2349px;height:1px;background:#a9a9a9;"></div>
<div class="t" style="left:41px;top:239.0px;font-size:16px;line-height:22px;color:#777;letter-spacing:-0.15px;">Item.No</div>
<div class="t" style="left:277px;top:239.0px;font-size:16px;line-height:22px;color:#777;letter-spacing:-0.15px;">PosType</div>
<div class="t" style="left:475px;top:239.0px;font-size:16px;line-height:22px;color:#777;letter-spacing:-0.15px;">Short text</div>
<div class="t" style="left:1612px;top:239.0px;font-size:16px;line-height:22px;color:#777;letter-spacing:-0.15px;">Quatity</div>
<div class="t" style="left:1692px;top:239.0px;font-size:16px;line-height:22px;color:#777;letter-spacing:-0.15px;">Unit</div>
<div class="t" style="left:525px;width:1500px;text-align:right;top:239.0px;font-size:16px;line-height:22px;color:#777;letter-spacing:-0.15px;">UP</div>
<div class="t" style="left:2034px;top:239.0px;font-size:16px;line-height:22px;color:#777;letter-spacing:-0.15px;">TOTAL</div>
<div class="r" style="left:36px;top:266px;width:1px;height:372px;background:#e2e2e2;"></div>
<div class="r" style="left:0;top:0;width:2352px;height:638px;overflow:hidden;">
<div class="r" style="left:64px;top:294px;width:2259px;height:1px;background:#e2e2e2;"></div>
<div class="r" style="left:64px;top:266px;width:1px;height:28px;background:#e2e2e2;"></div>
<div class="r" style="left:272px;top:266px;width:1px;height:28px;background:#e2e2e2;"></div>
<div class="r" style="left:470px;top:266px;width:1px;height:28px;background:#e2e2e2;"></div>
<div class="r" style="left:1607px;top:266px;width:1px;height:28px;background:#e2e2e2;"></div>
<div class="r" style="left:1687px;top:266px;width:1px;height:28px;background:#e2e2e2;"></div>
<div class="r" style="left:1754px;top:266px;width:1px;height:28px;background:#e2e2e2;"></div>
<div class="r" style="left:2029px;top:266px;width:1px;height:28px;background:#e2e2e2;"></div>
<div class="r" style="left:2323px;top:266px;width:1px;height:28px;background:#e2e2e2;"></div>
<svg class="r" style="left:43px;top:274.5px" width="16" height="14" viewBox="0 0 16 14"><path d="M1 3.5L8 10L15 3.5" fill="none" stroke="#3a3a3a" stroke-width="2"/></svg>
<div class="t" style="left:69px;top:270.0px;font-size:16px;line-height:22px;color:#3d3d3d;letter-spacing:-0.15px;">Item.No</div>
<div class="t" style="left:277px;top:270.0px;font-size:16px;line-height:22px;color:#3d3d3d;letter-spacing:-0.15px;">NOTE</div>
<div class="t" style="left:475px;top:270.0px;font-size:16px;line-height:22px;color:#3d3d3d;letter-spacing:-0.15px;">BVBS GAEB Musterdatei Bauausführung</div>
<div class="r" style="left:91px;top:294px;width:2232px;height:1px;background:#e2e2e2;"></div>
<div class="r" style="left:91px;top:323px;width:2232px;height:1px;background:#e2e2e2;"></div>
<div class="r" style="left:91px;top:295px;width:1px;height:28px;background:#e2e2e2;"></div>
<div class="r" style="left:272px;top:295px;width:1px;height:28px;background:#e2e2e2;"></div>
<div class="r" style="left:470px;top:295px;width:1px;height:28px;background:#e2e2e2;"></div>
<div class="r" style="left:1607px;top:295px;width:1px;height:28px;background:#e2e2e2;"></div>
<div class="r" style="left:1687px;top:295px;width:1px;height:28px;background:#e2e2e2;"></div>
<div class="r" style="left:1754px;top:295px;width:1px;height:28px;background:#e2e2e2;"></div>
<div class="r" style="left:2029px;top:295px;width:1px;height:28px;background:#e2e2e2;"></div>
<div class="r" style="left:2323px;top:295px;width:1px;height:28px;background:#e2e2e2;"></div>
<div class="t" style="left:277px;top:299.0px;font-size:16px;line-height:22px;color:#3d3d3d;letter-spacing:-0.15px;">NOTE</div>
<div class="t" style="left:475px;top:299.0px;font-size:16px;line-height:22px;color:#3d3d3d;letter-spacing:-0.15px;">Für die Zertifizierung von GAEB DA XML Schnittstellen hat der BVBS Prüfkriterien herausgegeben.</div>
<div class="r" style="left:91px;top:323px;width:2232px;height:1px;background:#e2e2e2;"></div>
<div class="r" style="left:91px;top:352px;width:2232px;height:1px;background:#e2e2e2;"></div>
<div class="r" style="left:91px;top:324px;width:1px;height:28px;background:#e2e2e2;"></div>
<div class="r" style="left:272px;top:324px;width:1px;height:28px;background:#e2e2e2;"></div>
<div class="r" style="left:470px;top:324px;width:1px;height:28px;background:#e2e2e2;"></div>
<div class="r" style="left:1607px;top:324px;width:1px;height:28px;background:#e2e2e2;"></div>
<div class="r" style="left:1687px;top:324px;width:1px;height:28px;background:#e2e2e2;"></div>
<div class="r" style="left:1754px;top:324px;width:1px;height:28px;background:#e2e2e2;"></div>
<div class="r" style="left:2029px;top:324px;width:1px;height:28px;background:#e2e2e2;"></div>
<div class="r" style="left:2323px;top:324px;width:1px;height:28px;background:#e2e2e2;"></div>
<div class="t" style="left:277px;top:328.0px;font-size:16px;line-height:22px;color:#3d3d3d;letter-spacing:-0.15px;">NOTE</div>
<div class="t" style="left:475px;top:328.0px;font-size:16px;line-height:22px;color:#3d3d3d;letter-spacing:-0.15px;">Hinweistext</div>
<div class="r" style="left:91px;top:352px;width:2232px;height:1px;background:#e2e2e2;"></div>
<div class="r" style="left:91px;top:381px;width:2232px;height:1px;background:#e2e2e2;"></div>
<div class="r" style="left:91px;top:353px;width:1px;height:28px;background:#e2e2e2;"></div>
<div class="r" style="left:272px;top:353px;width:1px;height:28px;background:#e2e2e2;"></div>
<div class="r" style="left:470px;top:353px;width:1px;height:28px;background:#e2e2e2;"></div>
<div class="r" style="left:1607px;top:353px;width:1px;height:28px;background:#e2e2e2;"></div>
<div class="r" style="left:1687px;top:353px;width:1px;height:28px;background:#e2e2e2;"></div>
<div class="r" style="left:1754px;top:353px;width:1px;height:28px;background:#e2e2e2;"></div>
<div class="r" style="left:2029px;top:353px;width:1px;height:28px;background:#e2e2e2;"></div>
<div class="r" style="left:2323px;top:353px;width:1px;height:28px;background:#e2e2e2;"></div>
<svg class="r" style="left:69px;top:361.5px" width="16" height="14" viewBox="0 0 16 14"><path d="M1 3.5L8 10L15 3.5" fill="none" stroke="#3a3a3a" stroke-width="2"/></svg>
<div class="t" style="left:107px;top:357.0px;font-size:16px;line-height:22px;color:#4a4a4a;letter-spacing:-0.15px;">1</div>
<div class="t" style="left:277px;top:357.0px;font-size:16px;line-height:22px;color:#3d3d3d;letter-spacing:-0.15px;">SECTION</div>
<div class="t" style="left:475px;top:357.0px;font-size:16px;line-height:22px;color:#3d3d3d;letter-spacing:-0.15px;">Bauhauptgewerke</div>
<div class="t" style="left:819px;width:1500px;text-align:right;top:357.0px;font-size:16px;line-height:22px;color:#3d3d3d;letter-spacing:-0.15px;">0,00 €</div>
<div class="r" style="left:118px;top:381px;width:2205px;height:1px;background:#e2e2e2;"></div>
<div class="r" style="left:118px;top:410px;width:2205px;height:1px;background:#e2e2e2;"></div>
<div class="r" style="left:118px;top:382px;width:1px;height:28px;background:#e2e2e2;"></div>
<div class="r" style="left:272px;top:382px;width:1px;height:28px;background:#e2e2e2;"></div>
<div class="r" style="left:470px;top:382px;width:1px;height:28px;background:#e2e2e2;"></div>
<div class="r" style="left:1607px;top:382px;width:1px;height:28px;background:#e2e2e2;"></div>
<div class="r" style="left:1687px;top:382px;width:1px;height:28px;background:#e2e2e2;"></div>
<div class="r" style="left:1754px;top:382px;width:1px;height:28px;background:#e2e2e2;"></div>
<div class="r" style="left:2029px;top:382px;width:1px;height:28px;background:#e2e2e2;"></div>
<div class="r" style="left:2323px;top:382px;width:1px;height:28px;background:#e2e2e2;"></div>
<svg class="r" style="left:96px;top:390.5px" width="16" height="14" viewBox="0 0 16 14"><path d="M1 3.5L8 10L15 3.5" fill="none" stroke="#3a3a3a" stroke-width="2"/></svg>
<div class="t" style="left:133.5px;top:386.0px;font-size:16px;line-height:22px;color:#4a4a4a;letter-spacing:-0.15px;">1.</div>
<div class="t" style="left:158.3px;top:386.0px;font-size:16px;line-height:22px;color:#4a4a4a;letter-spacing:-0.15px;">1</div>
<div class="t" style="left:277px;top:386.0px;font-size:16px;line-height:22px;color:#3d3d3d;letter-spacing:-0.15px;">SECTION</div>
<div class="t" style="left:475px;top:386.0px;font-size:16px;line-height:22px;color:#3d3d3d;letter-spacing:-0.15px;">Baustelleneinrichtung</div>
<div class="t" style="left:819px;width:1500px;text-align:right;top:386.0px;font-size:16px;line-height:22px;color:#3d3d3d;letter-spacing:-0.15px;">0,00 €</div>
<div class="r" style="left:1755px;top:411px;width:274px;height:28px;background:#fdb913;"></div>
<div class="r" style="left:145px;top:410px;width:2178px;height:1px;background:#e2e2e2;"></div>
<div class="r" style="left:145px;top:439px;width:2178px;height:1px;background:#e2e2e2;"></div>
<div class="r" style="left:145px;top:411px;width:1px;height:28px;background:#e2e2e2;"></div>
<div class="r" style="left:272px;top:411px;width:1px;height:28px;background:#e2e2e2;"></div>
<div class="r" style="left:470px;top:411px;width:1px;height:28px;background:#e2e2e2;"></div>
<div class="r" style="left:1607px;top:411px;width:1px;height:28px;background:#e2e2e2;"></div>
<div class="r" style="left:1687px;top:411px;width:1px;height:28px;background:#e2e2e2;"></div>
<div class="r" style="left:1754px;top:411px;width:1px;height:28px;background:#e2e2e2;"></div>
<div class="r" style="left:2029px;top:411px;width:1px;height:28px;background:#e2e2e2;"></div>
<div class="r" style="left:2323px;top:411px;width:1px;height:28px;background:#e2e2e2;"></div>
<div class="t" style="left:160.9px;top:415.0px;font-size:16px;line-height:22px;color:#4a4a4a;letter-spacing:-0.15px;">1.</div>
<div class="t" style="left:184.2px;top:415.0px;font-size:16px;line-height:22px;color:#4a4a4a;letter-spacing:-0.15px;">1.</div>
<div class="t" style="left:208.3px;top:415.0px;font-size:16px;line-height:22px;color:#4a4a4a;letter-spacing:-0.15px;">10</div>
<div class="t" style="left:277px;top:415.0px;font-size:16px;line-height:22px;color:#111;letter-spacing:-0.15px;">STANDARD</div>
<div class="t" style="left:475px;top:415.0px;font-size:16px;line-height:22px;color:#111;letter-spacing:-0.15px;">Baustelleneinrichtung einrichten, vorhalten, räumen</div>
<div class="t" style="left:184px;width:1500px;text-align:right;top:415.0px;font-size:16px;line-height:22px;color:#111;letter-spacing:-0.15px;">1,000</div>
<div class="t" style="left:1692px;top:415.0px;font-size:16px;line-height:22px;color:#111;letter-spacing:-0.15px;">psch</div>
<div class="r" style="left:1755px;top:440px;width:274px;height:28px;background:#fdb913;"></div>
<div class="r" style="left:145px;top:439px;width:2178px;height:1px;background:#e2e2e2;"></div>
<div class="r" style="left:145px;top:468px;width:2178px;height:1px;background:#e2e2e2;"></div>
<div class="r" style="left:145px;top:440px;width:1px;height:28px;background:#e2e2e2;"></div>
<div class="r" style="left:272px;top:440px;width:1px;height:28px;background:#e2e2e2;"></div>
<div class="r" style="left:470px;top:440px;width:1px;height:28px;background:#e2e2e2;"></div>
<div class="r" style="left:1607px;top:440px;width:1px;height:28px;background:#e2e2e2;"></div>
<div class="r" style="left:1687px;top:440px;width:1px;height:28px;background:#e2e2e2;"></div>
<div class="r" style="left:1754px;top:440px;width:1px;height:28px;background:#e2e2e2;"></div>
<div class="r" style="left:2029px;top:440px;width:1px;height:28px;background:#e2e2e2;"></div>
<div class="r" style="left:2323px;top:440px;width:1px;height:28px;background:#e2e2e2;"></div>
<div class="t" style="left:160.9px;top:444.0px;font-size:16px;line-height:22px;color:#4a4a4a;letter-spacing:-0.15px;">1.</div>
<div class="t" style="left:184.2px;top:444.0px;font-size:16px;line-height:22px;color:#4a4a4a;letter-spacing:-0.15px;">1.</div>
<div class="t" style="left:208.3px;top:444.0px;font-size:16px;line-height:22px;color:#4a4a4a;letter-spacing:-0.15px;">10.1</div>
<div class="t" style="left:277px;top:444.0px;font-size:16px;line-height:22px;color:#111;letter-spacing:-0.15px;">DEMAND (WITH TOTAL)</div>
<div class="t" style="left:475px;top:444.0px;font-size:16px;line-height:22px;color:#111;letter-spacing:-0.15px;">Betreiben der Wasserhaltungsanlage</div>
<div class="t" style="left:184px;width:1500px;text-align:right;top:444.0px;font-size:16px;line-height:22px;color:#111;letter-spacing:-0.15px;">1,000</div>
<div class="t" style="left:1692px;top:444.0px;font-size:16px;line-height:22px;color:#111;letter-spacing:-0.15px;">Psch</div>
<div class="r" style="left:1755px;top:469px;width:274px;height:28px;background:#fdb913;"></div>
<div class="r" style="left:145px;top:468px;width:2178px;height:1px;background:#e2e2e2;"></div>
<div class="r" style="left:145px;top:497px;width:2178px;height:1px;background:#e2e2e2;"></div>
<div class="r" style="left:145px;top:469px;width:1px;height:28px;background:#e2e2e2;"></div>
<div class="r" style="left:272px;top:469px;width:1px;height:28px;background:#e2e2e2;"></div>
<div class="r" style="left:470px;top:469px;width:1px;height:28px;background:#e2e2e2;"></div>
<div class="r" style="left:1607px;top:469px;width:1px;height:28px;background:#e2e2e2;"></div>
<div class="r" style="left:1687px;top:469px;width:1px;height:28px;background:#e2e2e2;"></div>
<div class="r" style="left:1754px;top:469px;width:1px;height:28px;background:#e2e2e2;"></div>
<div class="r" style="left:2029px;top:469px;width:1px;height:28px;background:#e2e2e2;"></div>
<div class="r" style="left:2323px;top:469px;width:1px;height:28px;background:#e2e2e2;"></div>
<div class="t" style="left:160.9px;top:473.0px;font-size:16px;line-height:22px;color:#4a4a4a;letter-spacing:-0.15px;">1.</div>
<div class="t" style="left:184.2px;top:473.0px;font-size:16px;line-height:22px;color:#4a4a4a;letter-spacing:-0.15px;">1.</div>
<div class="t" style="left:208.3px;top:473.0px;font-size:16px;line-height:22px;color:#4a4a4a;letter-spacing:-0.15px;">10.A</div>
<div class="t" style="left:277px;top:473.0px;font-size:16px;line-height:22px;color:#111;letter-spacing:-0.15px;">DEMAND (WITH TOTAL)</div>
<div class="t" style="left:475px;top:473.0px;font-size:16px;line-height:22px;color:#111;letter-spacing:-0.15px;">Betreiben der Wasserhaltungsanlage mit Überwachung</div>
<div class="t" style="left:184px;width:1500px;text-align:right;top:473.0px;font-size:16px;line-height:22px;color:#111;letter-spacing:-0.15px;">1,000</div>
<div class="t" style="left:1692px;top:473.0px;font-size:16px;line-height:22px;color:#111;letter-spacing:-0.15px;">PSCH</div>
<div class="r" style="left:118px;top:497px;width:2205px;height:1px;background:#e2e2e2;"></div>
<div class="r" style="left:118px;top:526px;width:2205px;height:1px;background:#e2e2e2;"></div>
<div class="r" style="left:118px;top:498px;width:1px;height:28px;background:#e2e2e2;"></div>
<div class="r" style="left:272px;top:498px;width:1px;height:28px;background:#e2e2e2;"></div>
<div class="r" style="left:470px;top:498px;width:1px;height:28px;background:#e2e2e2;"></div>
<div class="r" style="left:1607px;top:498px;width:1px;height:28px;background:#e2e2e2;"></div>
<div class="r" style="left:1687px;top:498px;width:1px;height:28px;background:#e2e2e2;"></div>
<div class="r" style="left:1754px;top:498px;width:1px;height:28px;background:#e2e2e2;"></div>
<div class="r" style="left:2029px;top:498px;width:1px;height:28px;background:#e2e2e2;"></div>
<div class="r" style="left:2323px;top:498px;width:1px;height:28px;background:#e2e2e2;"></div>
<svg class="r" style="left:96px;top:506.5px" width="16" height="14" viewBox="0 0 16 14"><path d="M1 3.5L8 10L15 3.5" fill="none" stroke="#3a3a3a" stroke-width="2"/></svg>
<div class="t" style="left:133.5px;top:502.0px;font-size:16px;line-height:22px;color:#5a5a5a;letter-spacing:-0.15px;">1.</div>
<div class="t" style="left:158.3px;top:502.0px;font-size:16px;line-height:22px;color:#5a5a5a;letter-spacing:-0.15px;">2</div>
<div class="t" style="left:277px;top:502.0px;font-size:16px;line-height:22px;color:#5a5a5a;letter-spacing:-0.15px;">SECTION</div>
<div class="t" style="left:475px;top:502.0px;font-size:16px;line-height:22px;color:#5a5a5a;letter-spacing:-0.15px;">Erdarbeiten</div>
<div class="t" style="left:819px;width:1500px;text-align:right;top:502.0px;font-size:16px;line-height:22px;color:#5a5a5a;letter-spacing:-0.15px;">0,00 €</div>
<div class="r" style="left:145px;top:527px;width:325px;height:28px;background:#cce4f7;"></div>
<div class="r" style="left:1607px;top:527px;width:716px;height:28px;background:#cce4f7;"></div>
<div class="r" style="left:1755px;top:527px;width:274px;height:28px;background:#fdb913;"></div>
<div class="r" style="left:145px;top:526px;width:2178px;height:1px;background:#e2e2e2;"></div>
<div class="r" style="left:145px;top:555px;width:2178px;height:1px;background:#e2e2e2;"></div>
<div class="r" style="left:145px;top:527px;width:1px;height:28px;background:#e2e2e2;"></div>
<div class="r" style="left:272px;top:527px;width:1px;height:28px;background:#e2e2e2;"></div>
<div class="r" style="left:470px;top:527px;width:1px;height:28px;background:#e2e2e2;"></div>
<div class="r" style="left:1607px;top:527px;width:1px;height:28px;background:#e2e2e2;"></div>
<div class="r" style="left:1687px;top:527px;width:1px;height:28px;background:#e2e2e2;"></div>
<div class="r" style="left:1754px;top:527px;width:1px;height:28px;background:#e2e2e2;"></div>
<div class="r" style="left:2029px;top:527px;width:1px;height:28px;background:#e2e2e2;"></div>
<div class="r" style="left:2323px;top:527px;width:1px;height:28px;background:#e2e2e2;"></div>
<div class="t" style="left:160.9px;top:531.0px;font-size:16px;line-height:22px;color:#4a4a4a;letter-spacing:-0.15px;">1.</div>
<div class="t" style="left:184.2px;top:531.0px;font-size:16px;line-height:22px;color:#4a4a4a;letter-spacing:-0.15px;">2.</div>
<div class="t" style="left:208.3px;top:531.0px;font-size:16px;line-height:22px;color:#4a4a4a;letter-spacing:-0.15px;">10</div>
<div class="t" style="left:277px;top:531.0px;font-size:16px;line-height:22px;color:#111;letter-spacing:-0.15px;">STANDARD</div>
<div class="t" style="left:475px;top:531.0px;font-size:16px;line-height:22px;color:#111;letter-spacing:-0.15px;">Boden für Baugrube, BK 3</div>
<div class="t" style="left:184px;width:1500px;text-align:right;top:531.0px;font-size:16px;line-height:22px;color:#111;letter-spacing:-0.15px;">450,000</div>
<div class="t" style="left:1692px;top:531.0px;font-size:16px;line-height:22px;color:#111;letter-spacing:-0.15px;">m3</div>
<div class="r" style="left:470px;top:527px;width:1137px;height:28px;border:1px dotted #111;"></div>
<div class="r" style="left:1755px;top:556px;width:274px;height:28px;background:#fdb913;"></div>
<div class="r" style="left:145px;top:555px;width:2178px;height:1px;background:#e2e2e2;"></div>
<div class="r" style="left:145px;top:584px;width:2178px;height:1px;background:#e2e2e2;"></div>
<div class="r" style="left:145px;top:556px;width:1px;height:28px;background:#e2e2e2;"></div>
<div class="r" style="left:272px;top:556px;width:1px;height:28px;background:#e2e2e2;"></div>
<div class="r" style="left:470px;top:556px;width:1px;height:28px;background:#e2e2e2;"></div>
<div class="r" style="left:1607px;top:556px;width:1px;height:28px;background:#e2e2e2;"></div>
<div class="r" style="left:1687px;top:556px;width:1px;height:28px;background:#e2e2e2;"></div>
<div class="r" style="left:1754px;top:556px;width:1px;height:28px;background:#e2e2e2;"></div>
<div class="r" style="left:2029px;top:556px;width:1px;height:28px;background:#e2e2e2;"></div>
<div class="r" style="left:2323px;top:556px;width:1px;height:28px;background:#e2e2e2;"></div>
<div class="t" style="left:160.9px;top:560.0px;font-size:16px;line-height:22px;color:#4a4a4a;letter-spacing:-0.15px;">1.</div>
<div class="t" style="left:184.2px;top:560.0px;font-size:16px;line-height:22px;color:#4a4a4a;letter-spacing:-0.15px;">2.</div>
<div class="t" style="left:208.3px;top:560.0px;font-size:16px;line-height:22px;color:#4a4a4a;letter-spacing:-0.15px;">20</div>
<div class="t" style="left:277px;top:560.0px;font-size:16px;line-height:22px;color:#111;letter-spacing:-0.15px;">STANDARD</div>
<div class="t" style="left:475px;top:560.0px;font-size:16px;line-height:22px;color:#111;letter-spacing:-0.15px;">Boden Graben Kanal Tiefe bis 1,45 m lösen, lagern Bodenklasse 3</div>
<div class="t" style="left:184px;width:1500px;text-align:right;top:560.0px;font-size:16px;line-height:22px;color:#111;letter-spacing:-0.15px;">7200,000</div>
<div class="t" style="left:1692px;top:560.0px;font-size:16px;line-height:22px;color:#111;letter-spacing:-0.15px;">m3</div>
<div class="r" style="left:1755px;top:585px;width:274px;height:28px;background:#fdb913;"></div>
<div class="r" style="left:145px;top:584px;width:2178px;height:1px;background:#e2e2e2;"></div>
<div class="r" style="left:145px;top:613px;width:2178px;height:1px;background:#e2e2e2;"></div>
<div class="r" style="left:145px;top:585px;width:1px;height:28px;background:#e2e2e2;"></div>
<div class="r" style="left:272px;top:585px;width:1px;height:28px;background:#e2e2e2;"></div>
<div class="r" style="left:470px;top:585px;width:1px;height:28px;background:#e2e2e2;"></div>
<div class="r" style="left:1607px;top:585px;width:1px;height:28px;background:#e2e2e2;"></div>
<div class="r" style="left:1687px;top:585px;width:1px;height:28px;background:#e2e2e2;"></div>
<div class="r" style="left:1754px;top:585px;width:1px;height:28px;background:#e2e2e2;"></div>
<div class="r" style="left:2029px;top:585px;width:1px;height:28px;background:#e2e2e2;"></div>
<div class="r" style="left:2323px;top:585px;width:1px;height:28px;background:#e2e2e2;"></div>
<div class="t" style="left:160.9px;top:589.0px;font-size:16px;line-height:22px;color:#4a4a4a;letter-spacing:-0.15px;">1.</div>
<div class="t" style="left:184.2px;top:589.0px;font-size:16px;line-height:22px;color:#4a4a4a;letter-spacing:-0.15px;">2.</div>
<div class="t" style="left:208.3px;top:589.0px;font-size:16px;line-height:22px;color:#4a4a4a;letter-spacing:-0.15px;">30</div>
<div class="t" style="left:277px;top:589.0px;font-size:16px;line-height:22px;color:#111;letter-spacing:-0.15px;">STANDARD</div>
<div class="t" style="left:475px;top:589.0px;font-size:16px;line-height:22px;color:#111;letter-spacing:-0.15px;">Oberboden abtragen, lagern d= 30 cm Bodengruppe 4</div>
<div class="t" style="left:184px;width:1500px;text-align:right;top:589.0px;font-size:16px;line-height:22px;color:#111;letter-spacing:-0.15px;">123456...</div>
<div class="t" style="left:1692px;top:589.0px;font-size:16px;line-height:22px;color:#111;letter-spacing:-0.15px;">m2</div>
<div class="r" style="left:1755px;top:614px;width:274px;height:28px;background:#fdb913;"></div>
<div class="r" style="left:145px;top:613px;width:2178px;height:1px;background:#e2e2e2;"></div>
<div class="r" style="left:145px;top:642px;width:2178px;height:1px;background:#e2e2e2;"></div>
<div class="r" style="left:145px;top:614px;width:1px;height:28px;background:#e2e2e2;"></div>
<div class="r" style="left:272px;top:614px;width:1px;height:28px;background:#e2e2e2;"></div>
<div class="r" style="left:470px;top:614px;width:1px;height:28px;background:#e2e2e2;"></div>
<div class="r" style="left:1607px;top:614px;width:1px;height:28px;background:#e2e2e2;"></div>
<div class="r" style="left:1687px;top:614px;width:1px;height:28px;background:#e2e2e2;"></div>
<div class="r" style="left:1754px;top:614px;width:1px;height:28px;background:#e2e2e2;"></div>
<div class="r" style="left:2029px;top:614px;width:1px;height:28px;background:#e2e2e2;"></div>
<div class="r" style="left:2323px;top:614px;width:1px;height:28px;background:#e2e2e2;"></div>
<div class="t" style="left:160.9px;top:618.0px;font-size:16px;line-height:22px;color:#4a4a4a;letter-spacing:-0.15px;">1.</div>
<div class="t" style="left:184.2px;top:618.0px;font-size:16px;line-height:22px;color:#4a4a4a;letter-spacing:-0.15px;">2.</div>
<div class="t" style="left:208.3px;top:618.0px;font-size:16px;line-height:22px;color:#4a4a4a;letter-spacing:-0.15px;">40</div>
<div class="t" style="left:277px;top:618.0px;font-size:16px;line-height:22px;color:#111;letter-spacing:-0.15px;">BASEITEM(1.0)</div>
<div class="t" style="left:475px;top:618.0px;font-size:16px;line-height:22px;color:#111;letter-spacing:-0.15px;">Betonpflaster L/B 100/100 mm H 80 mm  grau</div>
<div class="t" style="left:184px;width:1500px;text-align:right;top:618.0px;font-size:16px;line-height:22px;color:#111;letter-spacing:-0.15px;">1245,000</div>
<div class="t" style="left:1692px;top:618.0px;font-size:16px;line-height:22px;color:#111;letter-spacing:-0.15px;">m2</div>
</div>
<svg class="r" style="left:13px;top:533px" width="12" height="18" viewBox="0 0 12 18"><path d="M3 2.5L9 8.5L3 14.5z" fill="#7c7a7c"/></svg>
<div class="r" style="left:2px;top:638px;width:2349px;height:1px;background:#a9a9a9;"></div>
<div class="r" style="left:2324px;top:266px;width:27px;height:372px;background:#f0f0f0;"></div>
<div class="r" style="left:2325px;top:267px;width:24px;height:25px;background:#fff;border:1px solid #b4b4b4;"></div>
<svg class="r" style="left:2329px;top:271px" width="16" height="14" viewBox="0 0 16 14"><path d="M3 10L8 5L13 10z" fill="#777"/></svg>
<div class="r" style="left:2325px;top:292px;width:24px;height:80px;background:#fff;border:1px solid #b4b4b4;"></div>
<div class="r" style="left:2325px;top:612px;width:24px;height:25px;background:#fff;border:1px solid #b4b4b4;"></div>
<svg class="r" style="left:2329px;top:617px" width="16" height="14" viewBox="0 0 16 14"><path d="M3 4L8 9L13 4z" fill="#777"/></svg>
<div class="r" style="left:2px;top:654px;width:173px;height:31px;background:#fff;border:1px solid #c8c8c8;border-bottom:none;"></div>
<div class="t" style="left:13px;top:659.0px;font-size:16px;line-height:22px;color:#555;letter-spacing:-0.15px;">Short- and Long text</div>
<div class="r" style="left:3px;top:683px;width:1462px;height:551px;border:1px solid #a9a9a9;border-top:2px solid #a9a9a9;border-right:2px solid #a9a9a9;border-bottom:2px solid #a9a9a9;background:#fff;"></div>
<div class="r" style="left:3px;top:719px;width:1463px;height:1px;background:#a9a9a9;"></div>
<div class="r" style="left:3px;top:735px;width:1463px;height:1px;background:#a9a9a9;"></div>
<div class="t" style="left:26px;top:689.0px;font-size:20px;line-height:28px;color:#000;">Boden für Baugrube, BK 3</div>
<div class="r" style="left:1438px;top:686px;width:24px;height:16px;border:1px solid #e0e0e0;"></div>
<div class="r" style="left:1438px;top:702px;width:24px;height:16px;border:1px solid #e0e0e0;"></div>
<svg class="r" style="left:1444px;top:688px" width="12" height="12" viewBox="0 0 12 12"><path d="M2 8L6 4L10 8z" fill="#c8c8c8"/></svg>
<svg class="r" style="left:1444px;top:704px" width="12" height="12" viewBox="0 0 12 12"><path d="M2 4L6 8L10 4z" fill="#c8c8c8"/></svg>
<div class="t" style="left:26px;top:740.0px;font-size:20px;line-height:28px;color:#000;">Boden für Baugruben ab Baugrubensohle profilgerecht lösen und außerhalb der Baugrube lagern,</div>
<div class="t" style="left:26px;top:763.5px;font-size:20px;line-height:28px;color:#000;letter-spacing:0.07px;">Ausführung mit geböschten Wänden, Aushubtiefe bis 2,8 m, Breite über 3 bis 4 m, Länge über 3 bis 4 m,</div>
<div class="t" style="left:26px;top:787.0px;font-size:20px;line-height:28px;color:#000;">Bodenklasse 3 DIN 18300.</div>
<div class="t" style="left:26px;top:831.5px;font-size:20px;line-height:28px;color:#000;">Langtext mit Grafik</div>
<div class="r" style="left:1437px;top:737px;width:26px;height:494px;background:#f0f0f0;"></div>
<div class="r" style="left:1438px;top:737px;width:24px;height:25px;background:#fff;border:1px solid #b4b4b4;"></div>
<svg class="r" style="left:1441.5px;top:741px" width="16" height="14" viewBox="0 0 16 14"><path d="M3 10L8 5L13 10z" fill="#777"/></svg>
<div class="r" style="left:1438px;top:762px;width:24px;height:408px;background:#fff;border:1px solid #b4b4b4;"></div>
<div class="r" style="left:1438px;top:1206px;width:24px;height:25px;background:#fff;border:1px solid #b4b4b4;"></div>
<svg class="r" style="left:1442px;top:1211px" width="16" height="14" viewBox="0 0 16 14"><path d="M3 4L8 9L13 4z" fill="#777"/></svg>
<svg class="r" style="left:26px;top:880px" width="323" height="352" viewBox="26 880 323 352"><defs><clipPath id="pc"><rect x="26" y="880" width="323" height="352"/></clipPath><filter id="nz" x="0" y="0" width="100%" height="100%"><feTurbulence type="fractalNoise" baseFrequency="0.18 0.12" numOctaves="3" seed="7" result="t"/><feColorMatrix in="t" type="matrix" values="0 0 0 0 0.3  0 0 0 0 0.24  0 0 0 0 0.22  2.6 0 0 0 -1.2"/></filter><filter id="nz2" x="0" y="0" width="100%" height="100%"><feTurbulence type="fractalNoise" baseFrequency="0.2" numOctaves="2" seed="11" result="t"/><feColorMatrix in="t" type="matrix" values="0 0 0 0 1  0 0 0 0 0.98  0 0 0 0 0.97  0 2.2 0 0 -1.05"/></filter><clipPath id="rbc"><path d="M26 1116L82 1116L112 1094L132 1071L138 1032L155 998L200 990L222 1007L261 1052L287 1057L329 1043L349 1026V1232H26Z"/></clipPath></defs><g clip-path="url(#pc)"><linearGradient id="wl" x1="0" y1="0" x2="1" y2="0"><stop offset="0" stop-color="#978580"/><stop offset="0.35" stop-color="#ac9a92"/><stop offset="0.7" stop-color="#a8958d"/><stop offset="1" stop-color="#9e8a82"/></linearGradient><rect x="26" y="880" width="323" height="352" fill="url(#wl)"/><path d="M95 880H300Q290 920 250 935Q200 960 150 950Q110 935 100 905Z" fill="#bcaaa2" opacity="0.85"/><path d="M110 925Q150 915 180 935Q170 960 130 965Q105 955 110 925Z" fill="#b8a69d" opacity="0.8"/><path d="M230 900Q290 890 349 905V930Q300 940 250 930Z" fill="#b0a098" opacity="0.7"/><path d="M26 1116L82 1116L112 1094L132 1071L138 1032L155 998L200 990L222 1007L261 1052L287 1057L329 1043L349 1026V1232H26Z" fill="#d9cfcc"/><path d="M138 1032L155 998L200 990L222 1007L240 1030L215 1060L175 1075L140 1070Z" fill="#e4dcda"/><path d="M270 1075Q310 1065 349 1075V1120Q320 1115 285 1100Z" fill="#e6dfdd"/><path d="M26 1130Q70 1125 110 1150Q125 1185 100 1205Q60 1200 26 1195Z" fill="#cbbfba"/><path d="M26 1205Q80 1200 135 1215L140 1232H26Z" fill="#e0d8d5"/><rect x="26" y="880" width="323" height="352" filter="url(#nz)" opacity="0.75"/><rect x="26" y="880" width="323" height="180" filter="url(#nz2)" opacity="0.35"/><g clip-path="url(#rbc)"><rect x="26" y="990" width="323" height="242" filter="url(#nz2)" opacity="0.6"/></g><path d="M58 1060Q75 1052 92 1062L99 1078L60 1080Z" fill="#e6e0de"/><path d="M31 1064L42 1077L113 1084L96 1110L50 1110L38 1085Z" fill="#c9b99a"/><path d="M31 1064L42 1075L112 1083L108 1089L40 1083Z" fill="#ddac3c"/><path d="M65 953L90 955L92 968L90 999L60 1069L33 1066L48 1021Z" fill="#e0ad3a"/><path d="M75 960L88 960L86 998L64 1050L56 1048L70 1000Z" fill="#ebc35e" opacity="0.7"/><path d="M50 990L38 1050" stroke="#777" stroke-width="1.5"/><path d="M94 960L124 983" stroke="#8d8d8d" stroke-width="2.5"/><path d="M122 982L188 1031" stroke="#dcaa34" stroke-width="8" stroke-linecap="round"/><path d="M84 982L96 984L138 1010L187 1032L213 1053L222 1077L225 1104L200 1104L193 1071L178 1051L138 1031L91 999Z" fill="#e0ad3a"/><path d="M96 982L138 1008L189 1030L216 1052L225 1076L227 1104" fill="none" stroke="#2c2622" stroke-width="1.6"/><path d="M106 1006L150 1022L137 1030L116 1017Z" fill="#141414"/><text x="117" y="1023" font-family="Liberation Sans" font-weight="bold" font-size="9" fill="#fff" transform="rotate(22 125 1019)">CAT</text><path d="M202 1059L204 1104" stroke="#8a8a8a" stroke-width="3"/><path d="M170 1105L229 1102L240 1107L243 1158L243 1178L172 1178L167 1169L166 1115Z" fill="#e0ad3a"/><path d="M167 1113L229 1105L230 1150L213 1156L172 1176L167 1169Z" fill="#0f0f14"/><path d="M181 1112L193 1112L191 1147L181 1148Z" fill="#4a4648"/><path d="M195 1112L208 1110L208 1145L193 1147Z" fill="#3a3638"/><path d="M217 1112L227 1110L227 1135L218 1135Z" fill="#8a8078"/><rect x="160" y="1119" width="6" height="15" fill="#1a1a1a"/><path d="M243 1138L270 1136L313 1136L329 1134L336 1153L338 1187L168 1187L168 1178L243 1178Z" fill="#e0ad3a"/><path d="M314 1136L329 1134L336 1153L338 1187L314 1187Z" fill="#e8bf5c"/><path d="M272 1126L313 1126L314 1135L271 1136Z" fill="#14141a"/><path d="M277 1139H308" stroke="#2a2a2a" stroke-width="5" stroke-dasharray="1.6 1.6"/><path d="M218 1175L243 1160L269 1157L336 1156L338 1174L218 1176Z" fill="#0e0e14"/><path d="M220 1175.5H338" stroke="#7a2a22" stroke-width="1.4"/><text x="243" y="1174" font-family="Liberation Sans" font-weight="bold" font-size="11" fill="#fff">CAT</text><text x="284" y="1172.5" font-family="Liberation Sans" font-weight="bold" font-size="8.5" fill="#fff">318C</text><rect x="204" y="1187" width="52" height="6" fill="#5a524c"/><path d="M132 1194H308Q322 1196 322 1214Q322 1232 308 1234H132Z" fill="#3a3532"/><rect x="150" y="1207" width="130" height="19" fill="#8a8480"/><path d="M150 1213H280M150 1221H280" stroke="#4a4542" stroke-width="2"/><path d="M192 1200H260" stroke="#15151a" stroke-width="4"/><circle cx="296" cy="1214" r="14" fill="#2e2a28"/><circle cx="296" cy="1214" r="8" fill="#9a9590"/></g></svg>
<svg class="r" style="left:1118px;top:1100px" width="24" height="36" viewBox="0 0 24 36"><path d="M5.2 7.2H10.5L12 8.5L13.5 7.2H18.8M12 8.5V28.7M5.2 30H10.5L12 28.7L13.5 30H18.8" stroke="#000" stroke-width="1.7" fill="none"/></svg>
<div class="r" style="left:1480px;top:654px;width:1px;height:580px;background:#b4b4b4;"></div>
<div class="r" style="left:1535px;top:683px;width:816px;height:1px;background:#b4b4b4;"></div>
<div class="r" style="left:1480px;top:654px;width:55px;height:30px;background:#fff;border:1px solid #b4b4b4;border-bottom:none;"></div>
<div class="t" style="left:1491px;top:659.0px;font-size:16px;line-height:22px;color:#333;letter-spacing:-0.15px;">Item</div>
<div class="r" style="left:1535px;top:656px;width:143px;height:27px;background:#f0f0f0;border:1px solid #dadada;border-bottom:none;"></div>
<div class="t" style="left:1543px;top:660.0px;font-size:16px;line-height:22px;color:#444;letter-spacing:-0.15px;">BoQ Informations</div>
<div class="r" style="left:1677px;top:656px;width:155px;height:27px;background:#f0f0f0;border:1px solid #dadada;border-bottom:none;"></div>
<div class="t" style="left:1685px;top:660.0px;font-size:16px;line-height:22px;color:#444;letter-spacing:-0.15px;">Project information</div>
<div class="r" style="left:1831px;top:656px;width:113px;height:27px;background:#f0f0f0;border:1px solid #dadada;border-bottom:none;"></div>
<div class="t" style="left:1839px;top:660.0px;font-size:16px;line-height:22px;color:#444;letter-spacing:-0.15px;">BoQ statistics</div>
<div class="r" style="left:1943px;top:656px;width:93px;height:27px;background:#f0f0f0;border:1px solid #dadada;border-bottom:none;"></div>
<div class="t" style="left:1951px;top:660.0px;font-size:16px;line-height:22px;color:#444;letter-spacing:-0.15px;">GAEB Info</div>
<div class="r" style="left:2035px;top:656px;width:97px;height:27px;background:#f0f0f0;border:1px solid #dadada;border-bottom:none;"></div>
<div class="t" style="left:2043px;top:660.0px;font-size:16px;line-height:22px;color:#444;letter-spacing:-0.15px;">Award info</div>
<div class="t" style="left:1521px;top:704.0px;font-size:16px;line-height:22px;color:#333;letter-spacing:-0.15px;">Item.No</div>
<div class="t" style="left:1521px;top:737.0px;font-size:16px;line-height:22px;color:#333;letter-spacing:-0.15px;">Note</div>
<div class="t" style="left:1521px;top:772.0px;font-size:16px;line-height:22px;color:#333;letter-spacing:-0.15px;">STLB-Nr.:</div>
<div class="t" style="left:1521px;top:809.0px;font-size:16px;line-height:22px;color:#333;letter-spacing:-0.15px;">Quatity</div>
<div class="t" style="left:1521px;top:873.0px;font-size:16px;line-height:22px;color:#333;letter-spacing:-0.15px;">Prices</div>
<div class="t" style="left:1520px;top:915.0px;font-size:16px;line-height:22px;color:#333;letter-spacing:-0.15px;">no UP portions</div>
<div class="t" style="left:1647px;top:846.0px;font-size:16px;line-height:22px;color:#333;letter-spacing:-0.15px;">UP</div>
<div class="t" style="left:1790px;top:846.0px;font-size:16px;line-height:22px;color:#333;letter-spacing:-0.15px;">TOTAL</div>
<div class="t" style="left:1892px;top:809.0px;font-size:16px;line-height:22px;color:#333;letter-spacing:-0.15px;">Unit</div>
<div class="r" style="left:1647px;top:699px;width:384px;height:26px;border:1px solid #b4b4b4;background:#fff;"></div>
<div class="t" style="left:1661.5px;top:702.0px;font-size:16px;line-height:22px;color:#8a8a8a;letter-spacing:-0.15px;">1.</div>
<div class="t" style="left:1685px;top:702.0px;font-size:16px;line-height:22px;color:#8a8a8a;letter-spacing:-0.15px;">2.</div>
<div class="t" style="left:1709px;top:702.0px;font-size:16px;line-height:22px;color:#8a8a8a;letter-spacing:-0.15px;">10</div>
<div class="r" style="left:1647px;top:733px;width:384px;height:26px;border:1px solid #b4b4b4;background:#fff;"></div>
<div class="r" style="left:1647px;top:767px;width:384px;height:26px;border:1px solid #b4b4b4;background:#fff;"></div>
<div class="r" style="left:1647px;top:804px;width:220px;height:26px;border:1px solid #b4b4b4;background:#fff;"></div>
<div class="t" style="left:362px;width:1500px;text-align:right;top:807.0px;font-size:16px;line-height:22px;color:#8a8a8a;letter-spacing:-0.15px;">450,000</div>
<div class="r" style="left:1948px;top:806px;width:84px;height:26px;border:1px solid #b4b4b4;background:#fff;"></div>
<div class="t" style="left:1952px;top:809.0px;font-size:16px;line-height:22px;color:#8a8a8a;letter-spacing:-0.15px;">m3</div>
<div class="r" style="left:1647px;top:870px;width:134px;height:26px;border:1px solid #b4b4b4;background:#fff;"></div>
<div class="t" style="left:276px;width:1500px;text-align:right;top:873.0px;font-size:16px;line-height:22px;color:#222;letter-spacing:-0.15px;">0,000</div>
<div class="r" style="left:1790px;top:870px;width:242px;height:26px;border:1px solid #b4b4b4;background:#fff;"></div>
<div class="t" style="left:527px;width:1500px;text-align:right;top:873.0px;font-size:16px;line-height:22px;color:#8a8a8a;letter-spacing:-0.15px;">0,00</div>
<div class="r" style="left:1px;top:1233px;width:2351px;height:34px;background:#106ebe;"></div>
<div class="r" style="left:5px;top:1237px;width:345px;height:27px;background:#fff;"></div>
<div class="t" style="left:813px;width:1500px;text-align:right;top:1238.5px;font-size:17px;line-height:23px;color:#fff;">Items (with UP 0 from 28) *** Items (with free quantities 0 from 0) *** Items (with markups 0 from 1)</div>
<div class="r" style="left:2342px;top:1244px;width:3px;height:3px;background:#b9c4cc;border-radius:1px;"></div>
<div class="r" style="left:2336px;top:1250px;width:3px;height:3px;background:#b9c4cc;border-radius:1px;"></div>
<div class="r" style="left:2342px;top:1250px;width:3px;height:3px;background:#b9c4cc;border-radius:1px;"></div>
<div class="r" style="left:2330px;top:1256px;width:3px;height:3px;background:#b9c4cc;border-radius:1px;"></div>
<div class="r" style="left:2336px;top:1256px;width:3px;height:3px;background:#b9c4cc;border-radius:1px;"></div>
<div class="r" style="left:2342px;top:1256px;width:3px;height:3px;background:#b9c4cc;border-radius:1px;"></div>
</body></html>
